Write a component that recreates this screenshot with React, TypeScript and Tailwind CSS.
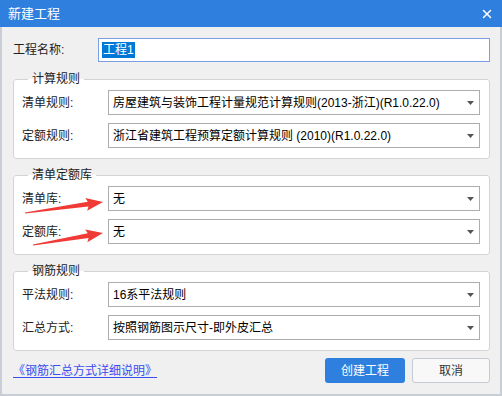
import { X } from 'lucide-react'

function Select({ value }: { value: string }) {
  return (
    <div className="flex-1 h-[25px] bg-white border border-[#adadad] flex items-center pl-[4px] pr-[5px]">
      <span className="flex-1 text-[12px] leading-[16px] text-black whitespace-nowrap overflow-hidden">{value}</span>
      <svg width="7" height="4" viewBox="0 0 7 4" className="shrink-0">
        <path d="M0 0h7L3.5 4z" fill="#555" />
      </svg>
    </div>
  )
}

function Row({ label, value }: { label: string; value: string }) {
  return (
    <div className="flex items-center">
      <span className="w-[86px] text-[12px] leading-[16px] text-[#222]">{label}</span>
      <Select value={value} />
    </div>
  )
}

function Group({ title, rows }: { title: string; rows: [string, string][] }) {
  return (
    <fieldset className="border border-[#d3d3d3] rounded-[3px] bg-white pl-[8px] pr-[9px] pt-[4px] pb-[10px] flex flex-col gap-[8px]">
      <legend className="ml-[6px] px-[4px] text-[12px] leading-[14px] text-[#222]">{title}</legend>
      {rows.map(([l, v]) => (
        <Row key={l} label={l} value={v} />
      ))}
    </fieldset>
  )
}

function Arrow({ x, y, len, angle }: { x: number; y: number; len: number; angle: number }) {
  const L = len
  const pts = `0,-0.6 ${L - 15},-2.4 ${L - 17},-6.5 ${L},0 ${L - 17},6.5 ${L - 15},2.4 0,0.6`
  return <polygon points={pts} fill="#ef3a35" transform={`translate(${x} ${y}) rotate(${angle})`} />
}

export default function App() {
  return (
    <div className="relative w-[502px] h-[396px] flex flex-col bg-[#f0f0f0] font-['Liberation_Sans','Noto_Sans_CJK_SC',sans-serif]">
      <div className="h-[27px] bg-[#2f80de] flex items-center justify-between pl-[8px] pr-[8px] shrink-0">
        <span className="text-white text-[13px]">新建工程</span>
        <X size={14} strokeWidth={2.5} className="text-white" />
      </div>

      <div className="flex-1 flex flex-col border-x-2 border-b-2 border-[#c9cdd4] pl-[11px] pr-[10px]">
        <div className="flex items-center mt-[11px]">
          <span className="w-[85px] text-[12px] text-[#222]">工程名称:</span>
          <div className="flex-1 h-[24px] bg-white border border-[#7a9fe3] flex items-center pl-[3px]">
            <span className="bg-[#0078d7] text-white text-[12px] leading-[16px] px-[1px]">工程1</span>
          </div>
        </div>

        <div className="mt-[10px]">
          <Group
            title="计算规则"
            rows={[
              ['清单规则:', '房屋建筑与装饰工程计量规范计算规则(2013-浙江)(R1.0.22.0)'],
              ['定额规则:', '浙江省建筑工程预算定额计算规则 (2010)(R1.0.22.0)'],
            ]}
          />
        </div>
        <div className="mt-[9px]">
          <Group
            title="清单定额库"
            rows={[
              ['清单库:', '无'],
              ['定额库:', '无'],
            ]}
          />
        </div>
        <div className="mt-[9px]">
          <Group
            title="钢筋规则"
            rows={[
              ['平法规则:', '16系平法规则'],
              ['汇总方式:', '按照钢筋图示尺寸-即外皮汇总'],
            ]}
          />
        </div>

        <div className="flex items-center mt-[7px]">
          <a className="flex-1 text-[12px] text-[#3b4cf3] underline underline-offset-2">《钢筋汇总方式详细说明》</a>
          <button className="w-[80px] h-[25px] rounded-[3px] bg-[#2f80de] text-white text-[12px] mr-[7px]">创建工程</button>
          <button className="w-[78px] h-[25px] rounded-[3px] bg-[#f8f8f8] border border-[#c6cad2] text-[#333] text-[12px]">取消</button>
        </div>
      </div>

      <svg className="absolute left-0 top-0 pointer-events-none" width="502" height="396">
        <Arrow x={25} y={213} len={78.8} angle={-8.03} />
        <Arrow x={33} y={245} len={71} angle={-9.7} />
      </svg>
    </div>
  )
}
